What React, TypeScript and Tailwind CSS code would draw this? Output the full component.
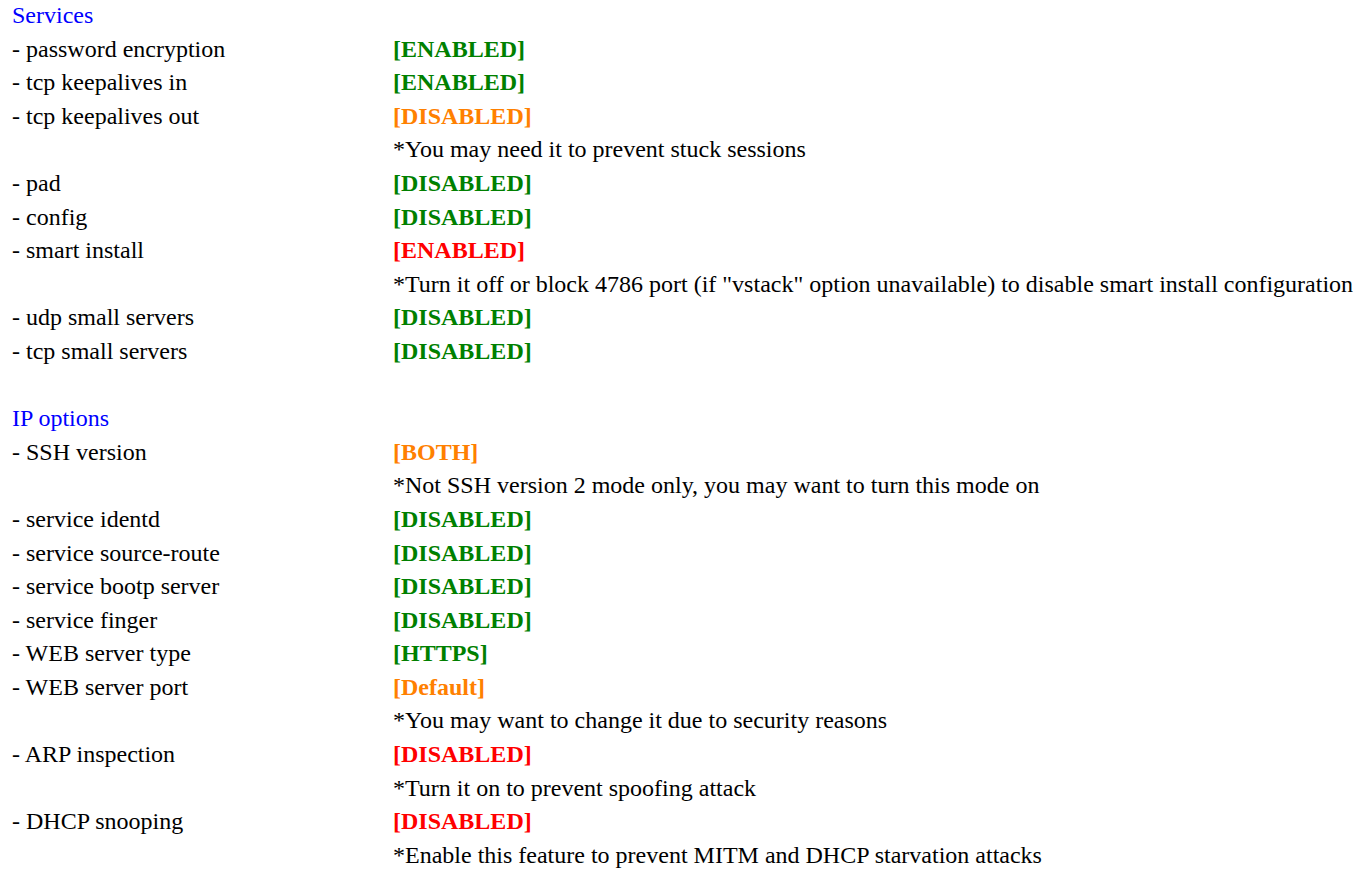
import React from 'react';

type Status = 'green' | 'orange' | 'red';

interface Row {
  label: string;
  value: string;
  status: Status;
  note?: string;
}

const statusClass: Record<Status, string> = {
  green: 'text-[#008000]',
  orange: 'text-[#ff8000]',
  red: 'text-[#ff0000]',
};

const services: Row[] = [
  { label: 'password encryption', value: 'ENABLED', status: 'green' },
  { label: 'tcp keepalives in', value: 'ENABLED', status: 'green' },
  {
    label: 'tcp keepalives out',
    value: 'DISABLED',
    status: 'orange',
    note: '*You may need it to prevent stuck sessions',
  },
  { label: 'pad', value: 'DISABLED', status: 'green' },
  { label: 'config', value: 'DISABLED', status: 'green' },
  {
    label: 'smart install',
    value: 'ENABLED',
    status: 'red',
    note: '*Turn it off or block 4786 port (if "vstack" option unavailable) to disable smart install configuration',
  },
  { label: 'udp small servers', value: 'DISABLED', status: 'green' },
  { label: 'tcp small servers', value: 'DISABLED', status: 'green' },
];

const ipOptions: Row[] = [
  {
    label: 'SSH version',
    value: 'BOTH',
    status: 'orange',
    note: '*Not SSH version 2 mode only, you may want to turn this mode on',
  },
  { label: 'service identd', value: 'DISABLED', status: 'green' },
  { label: 'service source-route', value: 'DISABLED', status: 'green' },
  { label: 'service bootp server', value: 'DISABLED', status: 'green' },
  { label: 'service finger', value: 'DISABLED', status: 'green' },
  { label: 'WEB server type', value: 'HTTPS', status: 'green' },
  {
    label: 'WEB server port',
    value: 'Default',
    status: 'orange',
    note: '*You may want to change it due to security reasons',
  },
  {
    label: 'ARP inspection',
    value: 'DISABLED',
    status: 'red',
    note: '*Turn it on to prevent spoofing attack',
  },
  {
    label: 'DHCP snooping',
    value: 'DISABLED',
    status: 'red',
    note: '*Enable this feature to prevent MITM and DHCP starvation attacks',
  },
];

const Section = ({ title, rows }: { title: string; rows: Row[] }) => (
  <div>
    <div className="text-[#0000ff]">{title}</div>
    <div className="grid grid-cols-[381px_1fr]">
      {rows.map(row => (
        <React.Fragment key={row.label}>
          <div>- {row.label}</div>
          <div className={`font-bold ${statusClass[row.status]}`}>[{row.value}]</div>
          {row.note && (
            <>
              <div></div>
              <div>{row.note}</div>
            </>
          )}
        </React.Fragment>
      ))}
    </div>
  </div>
);

export default function App() {
  return (
    <div className="bg-white text-black font-['Liberation_Serif','Times_New_Roman',serif] text-[24px] leading-[33.6px] pl-[12px] -mt-[1px] whitespace-nowrap">
      <Section title="Services" rows={services} />
      <div className="h-[33.6px]"></div>
      <Section title="IP options" rows={ipOptions} />
    </div>
  );
}
